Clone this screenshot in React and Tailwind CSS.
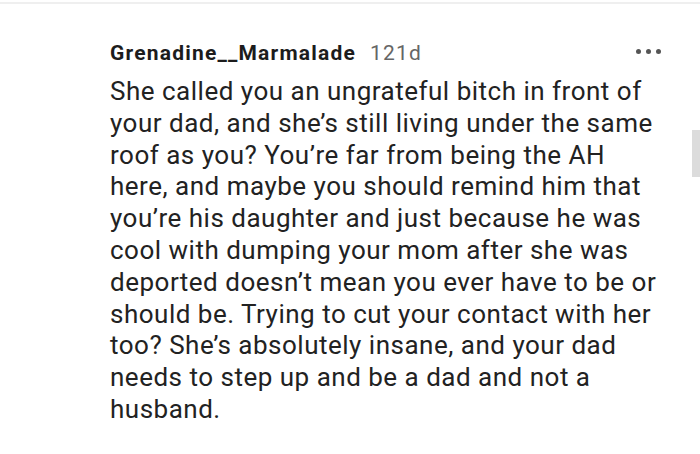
export default function App() {
  const lines = [
    "She called you an ungrateful bitch in front of",
    "your dad, and she\u2019s still living under the same",
    "roof as you? You\u2019re far from being the AH",
    "here, and maybe you should remind him that",
    "you\u2019re his daughter and just because he was",
    "cool with dumping your mom after she was",
    "deported doesn\u2019t mean you ever have to be or",
    "should be. Trying to cut your contact with her",
    "too? She\u2019s absolutely insane, and your dad",
    "needs to step up and be a dad and not a",
    "husband.",
  ];
  return (
    <div className="relative w-[700px] h-[454px] bg-white overflow-hidden" style={{ fontFamily: "Roboto, 'Noto Sans', sans-serif" }}>
      <div className="mt-[2px] h-[2px] w-full bg-[#efefef]" />
      <div className="pl-[110px] pr-[36px] pt-[36px] flex flex-col">
        <div className="flex items-center h-[26px]">
          <span className="text-[21px] font-bold tracking-[1.2px] text-[#1c1c1c] leading-none">Grenadine__Marmalade</span>
          <span className="ml-[14px] text-[21px] tracking-[1.2px] text-[#666] leading-none">121d</span>
          <div className="ml-auto mr-[3px] -mt-[4px] flex gap-[5px]">
            <span className="w-[5px] h-[5px] rounded-full bg-[#555]" />
            <span className="w-[5px] h-[5px] rounded-full bg-[#555]" />
            <span className="w-[5px] h-[5px] rounded-full bg-[#555]" />
          </div>
        </div>
        <div className="mt-[10px] text-[26px] tracking-[0.5px] leading-[31.8px] text-[#222]">
          {lines.map((l, i) => (
            <div key={i}>{l}</div>
          ))}
        </div>
      </div>
      <div className="absolute right-0 top-[130px] w-[8px] h-[47px] bg-[#dcdcdc]" />
    </div>
  );
}
